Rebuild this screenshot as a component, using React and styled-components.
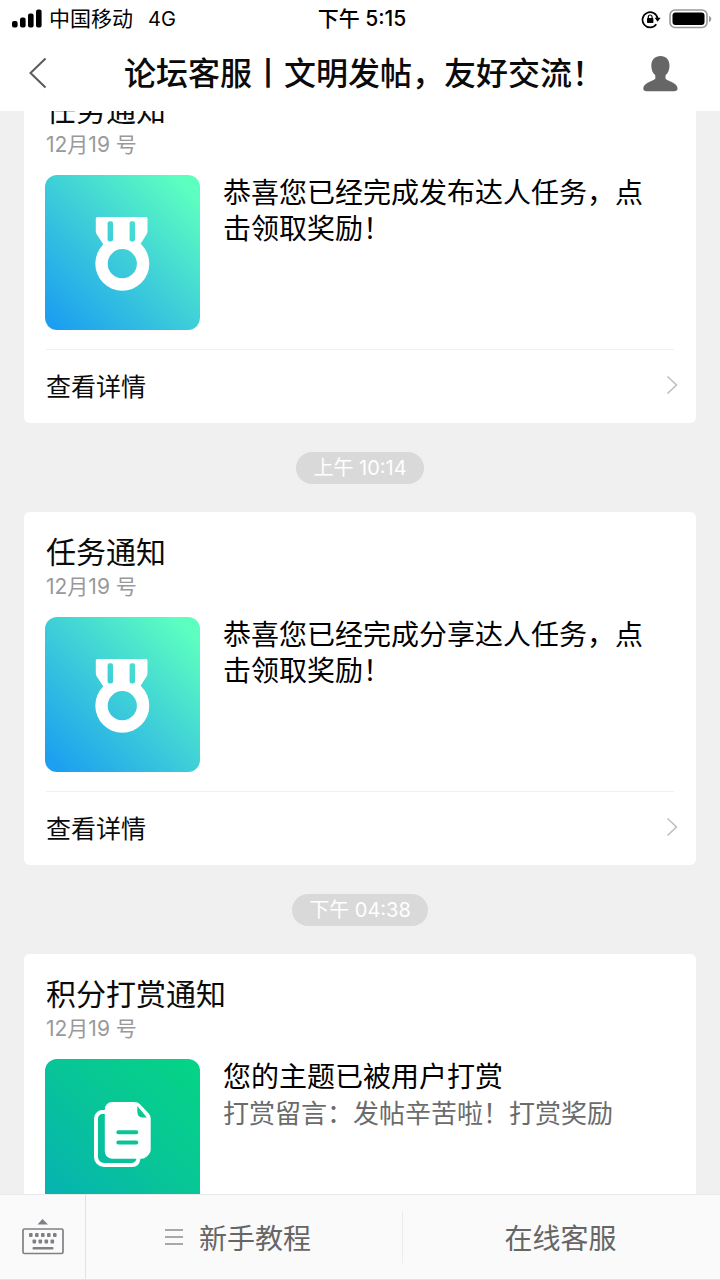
import React, { useId, useLayoutEffect, useRef } from "react";
import styled, { createGlobalStyle } from "styled-components";

const GlobalStyle = createGlobalStyle`
  * { box-sizing: border-box; }
  body {
    margin: 0;
    background: #f0f0f0;
    color: #0b0b0b;
    font-family: Inter, "Noto Sans CJK SC", sans-serif;
  }
  button { font: inherit; color: inherit; background: none; border: 0; padding: 0; cursor: pointer; }
  h1, h2, p { margin: 0; font-weight: 400; }
  svg { display: block; flex: none; }
`;

const Screen = styled.div`
  display: flex;
  flex-direction: column;
  height: 100vh;
`;

const StatusBar = styled.div`
  display: grid;
  grid-template-columns: 1fr auto 1fr;
  align-items: center;
  height: 37px;
  padding: 0 8px 0 12px;
  background: #fff;
  color: #000;
  font-size: 21px;
  line-height: 36px;
`;

const Carrier = styled.div`
  display: flex;
  align-items: center;
  gap: 7px;
`;

const Network = styled.span`
  margin-left: 8px;
  font-size: 20px;
`;

const Clock = styled.time`
  font-weight: 500;
`;

const StatusIcons = styled.div`
  display: flex;
  align-items: center;
  justify-content: flex-end;
  gap: 8px;
`;

const NavBar = styled.header`
  display: grid;
  grid-template-columns: 80px 1fr 80px;
  align-items: center;
  height: 74px;
  padding-right: 20px;
  padding-left: 24px;
  background: #fff;
`;

const NavTitle = styled.h1`
  padding-left: 4px;
  text-align: center;
  font-size: 32px;
  line-height: 44px;
  font-weight: 500;
  white-space: nowrap;
`;

const IconButton = styled.button`
  display: flex;
  align-items: center;
  justify-content: ${(p) => p.$align || "flex-start"};
  height: 100%;
`;

const Feed = styled.main`
  flex: 1;
  min-height: 0;
  overflow-y: auto;
  scrollbar-width: none;
  padding: 0 24px 28px;
  background: #f0f0f0;
`;

const TimeRow = styled.div`
  display: flex;
  justify-content: center;
  padding: 29px 0 28px;
`;

const TimePill = styled.time`
  padding: 0 17px;
  border-radius: 16px;
  background: #d9d9d9;
  color: #fff;
  font-size: 20px;
  line-height: 32px;
`;

const Card = styled.article`
  padding: 22px 22px 3px;
  border-radius: 6px;
  background: #fff;
`;

const CardTitle = styled.h2`
  font-size: 30px;
  line-height: 36px;
`;

const CardDate = styled.p`
  margin-top: 3px;
  color: #999;
  font-size: 21px;
  line-height: 28px;
`;

const CardBody = styled.div`
  display: flex;
  gap: 23px;
  margin: 16px 0 19px;
`;

const Tile = styled.div`
  flex: none;
  width: 155px;
  height: 155px;
  margin-left: -1px;
  border-radius: 12px;
  background: ${(p) =>
    p.$kind === "medal"
      ? "linear-gradient(45deg, #1c9ff0 5%, #3ecfd8 50%, #5cffc0 92%)"
      : "linear-gradient(45deg, #05b0b6, #08c498 50%, #05d585)"};
  color: #fff;
`;

const CardText = styled.div`
  flex: 1;
  min-width: 0;
  padding-right: 20px;
`;

const Message = styled.p`
  color: #000;
  font-size: 28px;
  line-height: 36px;
`;

const Note = styled.p`
  color: #6b6b6b;
  font-size: 26px;
  line-height: 38px;
`;

const DetailsButton = styled.button`
  display: flex;
  align-items: center;
  justify-content: space-between;
  width: 100%;
  height: 71px;
  border-top: 1px solid #f0f0f0;
  font-size: 25px;
`;

const BottomBar = styled.nav`
  display: grid;
  grid-template-columns: 86px 1fr 1fr;
  align-items: center;
  height: 86px;
  padding-right: 2px;
  border-top: 1px solid #e9e9e9;
  border-bottom: 1px solid #e2e2e2;
  background: #fafafa;
  color: #666;
`;

const KeyboardButton = styled.button`
  display: flex;
  align-items: center;
  justify-content: center;
  height: 100%;
  border-right: 1px solid #e2e2e2;
`;

const MenuButton = styled.button`
  display: flex;
  align-items: center;
  justify-content: center;
  gap: 16px;
  height: 52px;
  padding-right: ${(p) => (p.$hasIcon ? "12px" : "0")};
  font-size: 28px;

  & + & { border-left: 1px solid #ececec; }
`;

const SignalIcon = () => (
  <svg width="30" height="20" viewBox="0 0 30 20" fill="#000">
    <rect x="0" y="12" width="5.600" height="6.500" rx="2" />
    <rect x="8" y="8.500" width="5.600" height="10" rx="2" />
    <rect x="16" y="4.500" width="5.600" height="14" rx="2" />
    <rect x="24" y="0.500" width="5.600" height="18" rx="2" />
  </svg>
);

const RotationLockIcon = () => (
  <svg width="20" height="20" viewBox="0 0 20 20" fill="none" stroke="#000">
    <path d="M15.300 15.300A7.600 7.600 0 1 1 16.600 9.500" strokeWidth="1.700" />
    <path d="M13.600 8.700h6l-3 4z" fill="#000" stroke="none" />
    <rect x="6" y="9" width="6.400" height="5" rx="0.800" fill="#000" stroke="none" />
    <path d="M7.300 9.500V7.900a1.900 1.900 0 0 1 3.800 0v1.600" strokeWidth="1.200" />
  </svg>
);

const BatteryIcon = () => (
  <svg width="43" height="20" viewBox="0 0 43 20">
    <rect x="1" y="1" width="37" height="17.500" rx="5" fill="none" stroke="#999" strokeWidth="1.600" />
    <rect x="3.500" y="3.500" width="32" height="12.500" rx="3" fill="#000" />
    <path d="M40 7c3 1 3 5 0 6z" fill="#999" />
  </svg>
);

const BackIcon = () => (
  <svg width="24" height="32" viewBox="0 0 24 32" fill="none" stroke="#5a5a5a" strokeWidth="2">
    <path d="M21.500 0.500 6.500 15 21.500 29.500" />
  </svg>
);

const PersonIcon = () => (
  <svg width="36" height="36" viewBox="0 0 36 36" fill="#666">
    <path d="M18.500 0c5.400 0 9 3.800 9 9.500 0 4.500-1.400 7.500-4 9.700v3.500c1.300 1.600 4.800 2.400 8 4.300 2.700 1.600 4 3.200 4 5.500 0 1.800-1.200 2.700-3.200 2.700H4.500c-2 0-3.200-.9-3.200-2.700 0-2.300 1.300-3.900 4-5.500 3.200-1.900 6.700-2.700 8-4.300v-3.500c-2.600-2.200-4-5.200-4-9.700C9.300 3.800 13.100 0 18.500 0z" />
  </svg>
);

const ChevronIcon = () => (
  <svg width="12" height="20" viewBox="0 0 12 20" fill="none" stroke="#bdbdbd" strokeWidth="1.500" overflow="visible">
    <path d="M5.500 1.500 14.500 10 5.500 18.500" />
  </svg>
);

function MedalIcon() {
  const maskId = useId();
  return (
    <svg width="155" height="155" viewBox="0 0 155 155" fill="currentColor">
      <mask id={maskId} maskUnits="userSpaceOnUse" x="0" y="0" width="155" height="155">
        <rect width="155" height="155" fill="#fff" />
        <rect x="62.600" y="46.300" width="5.400" height="20.200" rx="2" fill="#000" />
        <rect x="84.600" y="46.300" width="5.400" height="20.200" rx="2" fill="#000" />
        <circle cx="77.300" cy="88.700" r="14.600" fill="#000" />
      </mask>
      <g mask={`url(#${maskId})`}>
        <path d="M52 42h49q1.500 0 1.500 1.500V56q0 2-1 3.500L95.500 69v12h-37.500V69l-6.200-9.500q-1-1.500-1-3.500V43.500q0-1.500 1.200-1.500z" />
        <circle cx="77.300" cy="88.700" r="27" />
      </g>
    </svg>
  );
}

const DocumentsIcon = () => (
  <svg width="155" height="155" viewBox="0 0 155 155" fill="currentColor">
    <path
      fillRule="evenodd"
      d="M67 43h22q4 0 6 2.200l8.500 9q2.200 2.300 2.200 5.500V91q0 2.500-2 4.500l-2.500 2.500q-1.800 1.700-4.500 1.700H67a7.200 7.200 0 0 1-7.200-7.200v-42A7.200 7.200 0 0 1 67 43z
         M92.300 47v5q0 6.500 5 6.500h4.500z
         M73.300 71.300a2 2 0 0 0 0 4h18a2 2 0 0 0 0-4z
         M73.300 81.500a2 2 0 0 0 0 4h18a2 2 0 0 0 0-4z"
    />
    <path
      d="M61 53h-3.500a6.500 6.500 0 0 0-6.500 6.500V98a8 8 0 0 0 8 8h28q6 0 6.500-7"
      fill="none"
      stroke="currentColor"
      strokeWidth="4"
    />
  </svg>
);

const KeyboardIcon = () => (
  <svg width="42" height="36" viewBox="0 0 42 36" fill="#7f8085">
    <path d="M20.500 0 26 5.500H15.500z" />
    <rect x="1" y="10" width="40" height="24.500" rx="1.500" fill="none" stroke="#7f8085" strokeWidth="1.700" />
    {[7, 13, 19, 25, 31].map((x) => <rect key={x} x={x} y="14" width="3.600" height="4" rx="1" />)}
    {[10.500, 16.500, 22.500, 28.500].map((x) => <rect key={x} x={x} y="20.500" width="3.600" height="4" rx="1" />)}
    <rect x="10.500" y="28" width="21" height="2.600" rx="1" />
  </svg>
);

const ListIcon = () => (
  <svg width="18" height="18" viewBox="0 0 18 18" stroke="#a8a8a8" strokeWidth="2">
    <path d="M0 2h18M0 9h18M0 16h18" />
  </svg>
);

const notices = [
  { id: 1, title: "任务通知", date: "12月19 号", kind: "medal", message: "恭喜您已经完成发布达人任务，点击领取奖励！", action: "查看详情" },
  { id: 2, time: "上午 10:14", title: "任务通知", date: "12月19 号", kind: "medal", message: "恭喜您已经完成分享达人任务，点击领取奖励！", action: "查看详情" },
  { id: 3, time: "下午 04:38", title: "积分打赏通知", date: "12月19 号", kind: "documents", message: "您的主题已被用户打赏", note: "打赏留言：发帖辛苦啦！打赏奖励" },
];

const INITIAL_SCROLL = 41;

function Notice({ time, title, date, kind, message, note, action }) {
  return (
    <>
      {time && <TimeRow><TimePill>{time}</TimePill></TimeRow>}
      <Card>
        <CardTitle>{title}</CardTitle>
        <CardDate>{date}</CardDate>
        <CardBody>
          <Tile $kind={kind}>{kind === "medal" ? <MedalIcon /> : <DocumentsIcon />}</Tile>
          <CardText>
            <Message>{message}</Message>
            {note && <Note>{note}</Note>}
          </CardText>
        </CardBody>
        {action && <DetailsButton type="button">{action}<ChevronIcon /></DetailsButton>}
      </Card>
    </>
  );
}

export default function App() {
  const feed = useRef(null);
  useLayoutEffect(() => {
    feed.current.scrollTop = INITIAL_SCROLL;
  }, []);

  return (
    <Screen>
      <GlobalStyle />
      <StatusBar>
        <Carrier>
          <SignalIcon />
          <span>中国移动</span>
          <Network>4G</Network>
        </Carrier>
        <Clock>下午 5:15</Clock>
        <StatusIcons>
          <RotationLockIcon />
          <BatteryIcon />
        </StatusIcons>
      </StatusBar>
      <NavBar>
        <IconButton type="button" aria-label="返回"><BackIcon /></IconButton>
        <NavTitle>论坛客服丨文明发帖，友好交流！</NavTitle>
        <IconButton type="button" aria-label="个人资料" $align="center"><PersonIcon /></IconButton>
      </NavBar>
      <Feed ref={feed}>
        {notices.map((n) => <Notice key={n.id} {...n} />)}
      </Feed>
      <BottomBar>
        <KeyboardButton type="button" aria-label="键盘"><KeyboardIcon /></KeyboardButton>
        <MenuButton type="button" $hasIcon><ListIcon />新手教程</MenuButton>
        <MenuButton type="button">在线客服</MenuButton>
      </BottomBar>
    </Screen>
  );
}
